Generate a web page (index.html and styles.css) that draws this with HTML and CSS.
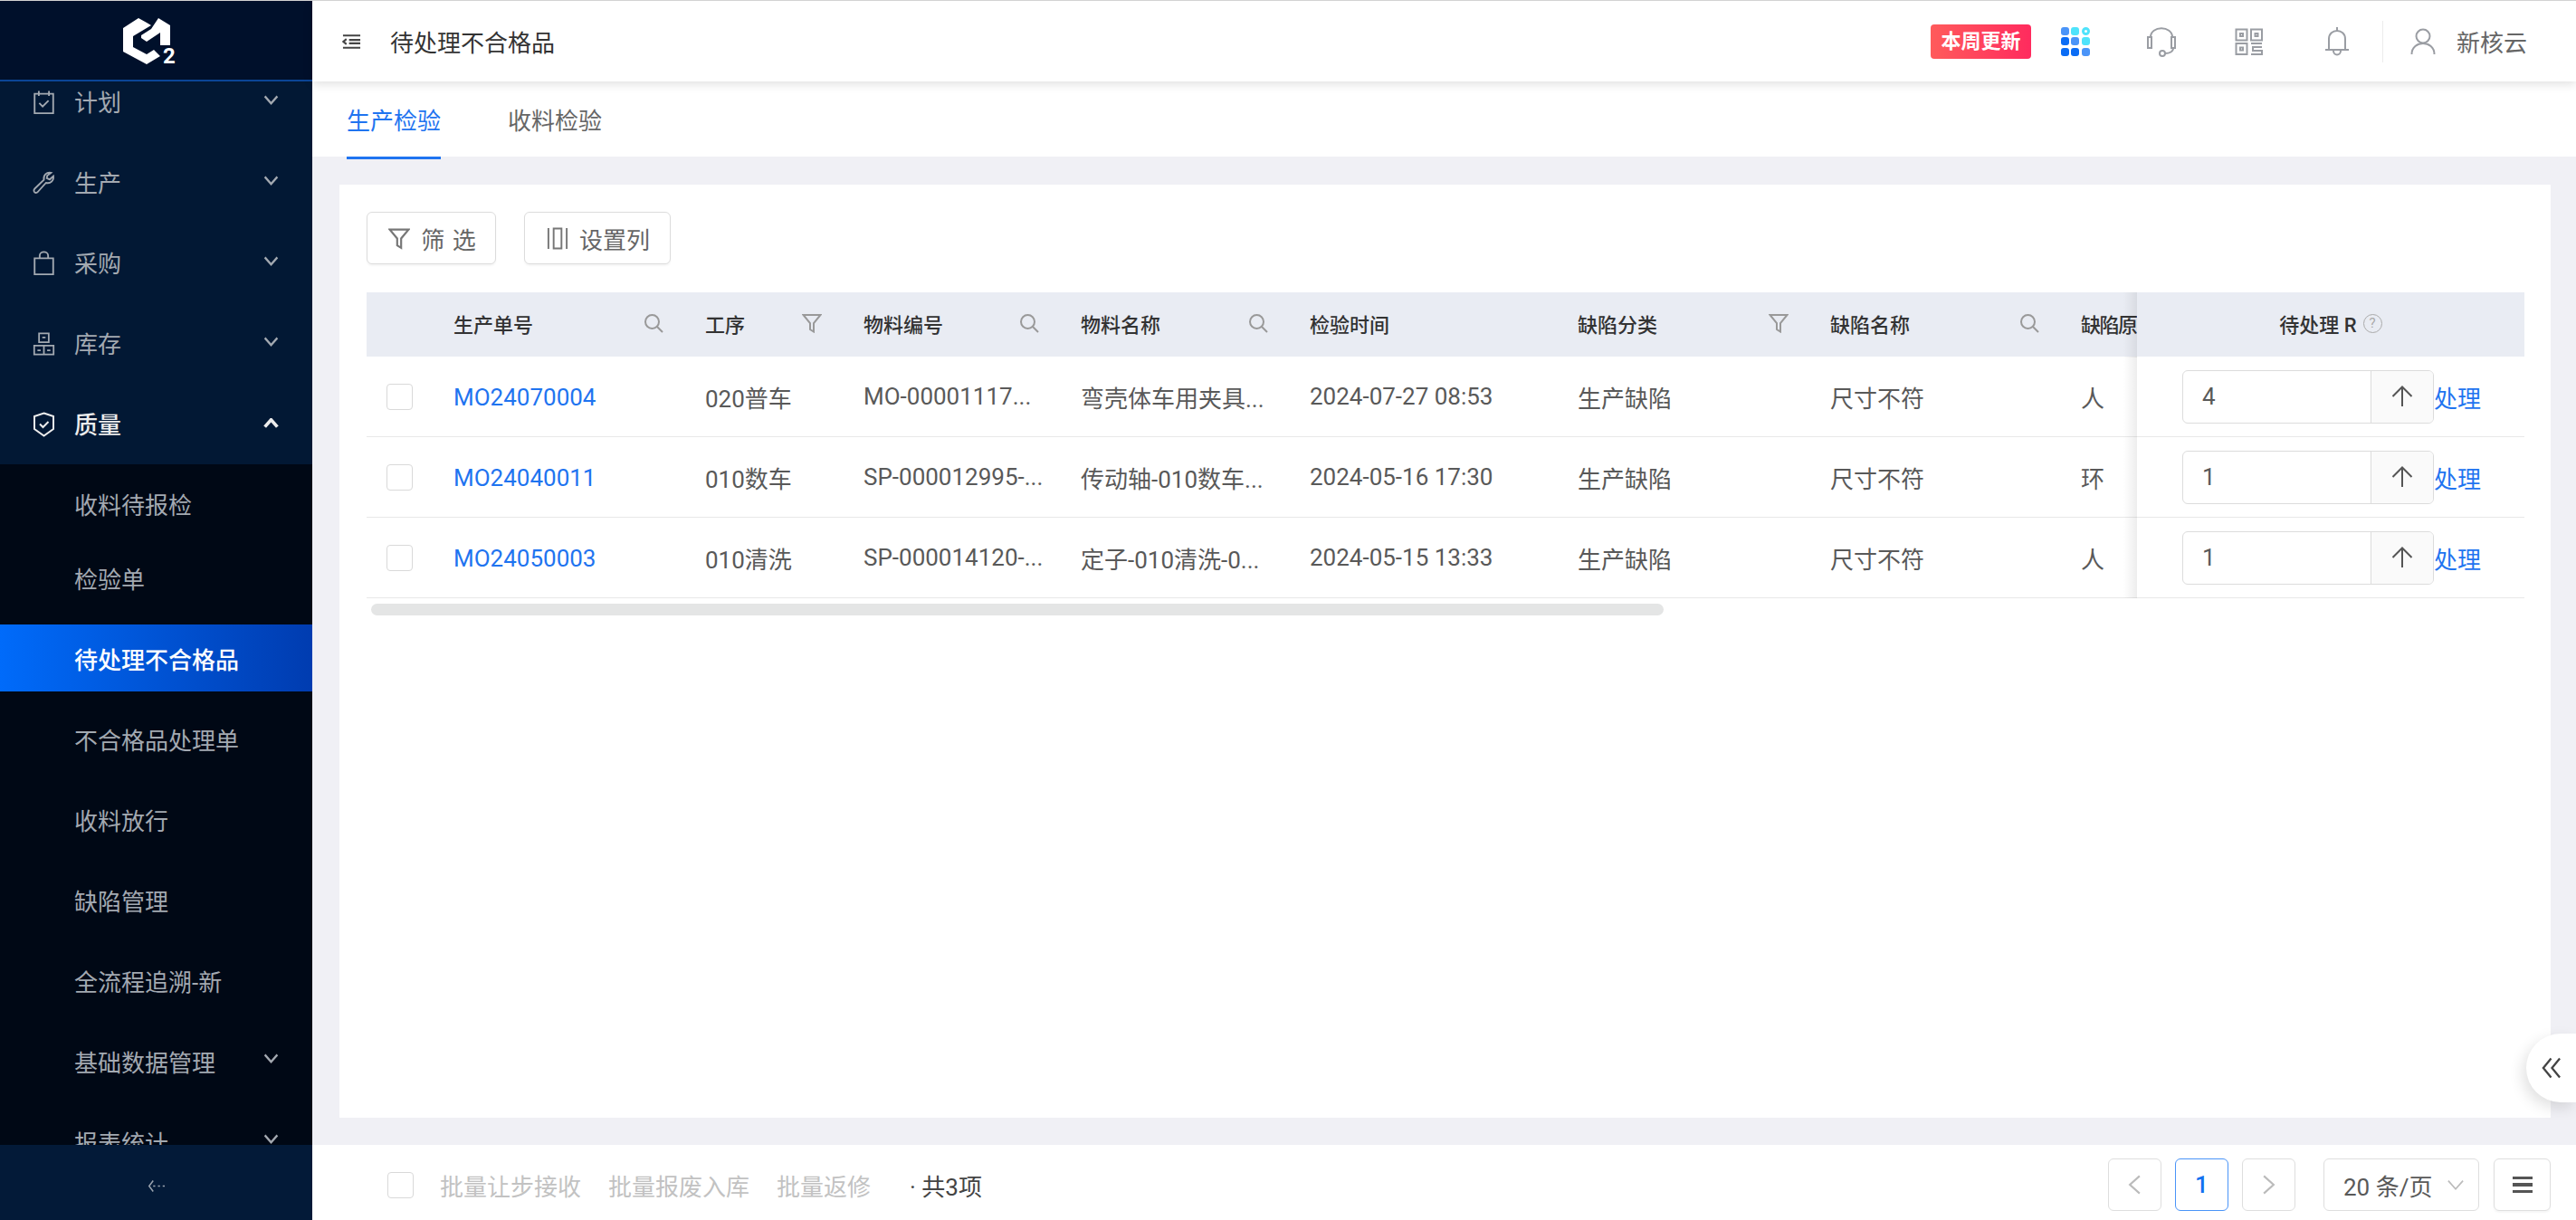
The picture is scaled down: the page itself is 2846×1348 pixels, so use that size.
FILE: index.html
```html
<!DOCTYPE html>
<html lang="zh-CN">
<head>
    <meta charset="UTF-8">
    <title>待处理不合格品</title>
    <link rel="stylesheet" href="styles.css">
</head>
<body>

<svg class="sprite" xmlns="http://www.w3.org/2000/svg">
    <symbol id="i-down" viewBox="0 0 18 12"><path d="M1.5 1.5 9 10l7.5-8.5"/></symbol>
    <symbol id="i-search" viewBox="0 0 22 22"><circle cx="9.5" cy="9.5" r="7.5"/><path d="m15 15 6 6"/></symbol>
    <symbol id="i-filter" viewBox="0 0 22 22"><path d="M1.5 2h19l-7.5 9v9.5l-4-2.5v-7z"/></symbol>
    <symbol id="i-up" viewBox="0 0 24 24"><path d="M12 23V1.500M1.500 12 12 1.500 22.500 12"/></symbol>
    <symbol id="i-plan" viewBox="0 0 26 30"><path d="M2 5h22v23H2zM7 1.500v6M19 1.500v6M7.500 16l4 4 7-7"/></symbol>
    <symbol id="i-tool" viewBox="0 0 27 27"><path d="M22 1.500C17 .5 12.500 4 13.500 10L2.500 20.500C1 22 1.500 24 2.500 24.800 3.800 25.800 5.500 25.500 6.500 24L16 13.500C21.500 15 25.500 10.500 24.800 5.500L20.500 9.500 17 8l.5-3z"/></symbol>
    <symbol id="i-bag" viewBox="0 0 26 30"><path d="M2 9h22v19H2zM8 9V6c0-6 10-6 10 0v3"/></symbol>
    <symbol id="i-stock" viewBox="0 0 28 30"><path d="M8 2h12v11H8zM2 17h12v11H2zM14 17h12v11H14zM12 7h4M6 23h4M18 23h4"/></symbol>
    <symbol id="i-shield" viewBox="0 0 24 28"><path d="M12 1.500 22.500 5v14L12 26.500 1.500 19V5zM7.500 13.500l3.500 3.500 6-6"/></symbol>
    <symbol id="i-headset" viewBox="0 0 34 34"><path d="M5 12C5 -1 29 -1 29 12M2 12h4v12H2zM28 12h4v12h-4zM30 24c0 4-4 6-9 6"/><circle cx="18" cy="30" r="3"/></symbol>
    <symbol id="i-qr" viewBox="0 0 32 30"><path d="M1.500 1.500h12v12h-12zM18 1.500h12v12H18zM1.500 17h12v12h-12zM6 6h3v3H6zM22.500 6h3v3h-3zM6 21.500h3v3H6zM18 17h12M30 21H20v4h10v4H18"/></symbol>
    <symbol id="i-bell" viewBox="0 0 28 34"><path d="M14 1v4M5 26V14c0-12 18-12 18 0v12M1 26h26M10 27c0 6 8 6 8 0"/></symbol>
    <symbol id="i-user" viewBox="0 0 28 30"><circle cx="14" cy="9" r="7.500"/><path d="M1.500 29c0-16 25-16 25 0"/></symbol>
</svg>

<aside class="sidebar">
    <div class="logo">
        <svg class="logo-mark" viewBox="0 0 90 70">
            <path d="M33 10 16 21v26l26 14 15-9-7-7-8 5-15-8V30l15-9 5-3-5-3z"/>
            <path d="M55 10 68 18v22H57V26L42 36l-6-4v-3l11-7z"/>
            <text x="60" y="59.500">2</text>
        </svg>
    </div>
    <nav class="nav">
        <div class="nav-scroll">
            <div class="nav-group">
                <a class="nav-item"><svg class="nav-icon"><use href="#i-plan"/></svg>计划<svg class="chevron"><use href="#i-down"/></svg></a>
                <a class="nav-item"><svg class="nav-icon"><use href="#i-tool"/></svg>生产<svg class="chevron"><use href="#i-down"/></svg></a>
                <a class="nav-item"><svg class="nav-icon"><use href="#i-bag"/></svg>采购<svg class="chevron"><use href="#i-down"/></svg></a>
                <a class="nav-item"><svg class="nav-icon"><use href="#i-stock"/></svg>库存<svg class="chevron"><use href="#i-down"/></svg></a>
                <a class="nav-item open"><svg class="nav-icon"><use href="#i-shield"/></svg>质量<svg class="chevron up"><use href="#i-down"/></svg></a>
            </div>
            <div class="nav-sub">
                <a class="sub-item tight">收料待报检</a>
                <a class="sub-item">检验单</a>
                <a class="sub-item active">待处理不合格品</a>
                <a class="sub-item">不合格品处理单</a>
                <a class="sub-item">收料放行</a>
                <a class="sub-item">缺陷管理</a>
                <a class="sub-item">全流程追溯-新</a>
                <a class="sub-item">基础数据管理<svg class="chevron"><use href="#i-down"/></svg></a>
                <a class="sub-item">报表统计<svg class="chevron"><use href="#i-down"/></svg></a>
            </div>
        </div>
    </nav>
    <div class="side-foot">
        <svg class="side-back" viewBox="0 0 26 20"><path d="M8 2 2 10l6 8M8 10h3M15 10h3M22 10h3"/></svg>
    </div>
</aside>

<div class="main">
    <header class="topbar">
        <svg class="fold" viewBox="0 0 22 18"><path d="M1 2h20M8 7h13M8 11h13M1 16h20M5 6 1.500 9 5 12"/></svg>
        <span class="page-title">待处理不合格品</span>
        <div class="top-right">
            <span class="badge">本周更新</span>
            <div class="apps">
                <i class="c2"></i><i class="c3"></i><i class="c3 ring"></i>
                <i class="c1"></i><i class="c2"></i><i class="c3"></i>
                <i class="c1"></i><i class="c1"></i><i class="c2"></i>
            </div>
            <svg class="top-icon headset"><use href="#i-headset"/></svg>
            <svg class="top-icon qr"><use href="#i-qr"/></svg>
            <svg class="top-icon bell"><use href="#i-bell"/></svg>
            <div class="account">
                <svg class="top-icon user"><use href="#i-user"/></svg>
                <span>新核云</span>
            </div>
        </div>
    </header>

    <div class="tabs">
        <a class="tab active">生产检验</a>
        <a class="tab">收料检验</a>
    </div>

    <div class="content">
        <div class="card">
            <div class="toolbar">
                <button class="btn filter-btn"><svg class="btn-icon"><use href="#i-filter"/></svg>筛 选</button>
                <button class="btn cols-btn">
                    <svg class="btn-icon" viewBox="0 0 24 26"><path d="M1.500 1v24M22.500 1v24M7.500 1.500h9v23h-9z"/></svg>设置列
                </button>
            </div>

            <table class="grid">
                <colgroup>
                    <col class="c-check"><col class="c-order"><col class="c-step"><col class="c-code">
                    <col class="c-name"><col class="c-time"><col class="c-type"><col class="c-defect">
                    <col class="c-cause"><col class="c-fixed">
                </colgroup>
                <thead>
                    <tr>
                        <th></th>
                        <th><div class="th-in">生产单号<svg class="th-icon"><use href="#i-search"/></svg></div></th>
                        <th><div class="th-in">工序<svg class="th-icon"><use href="#i-filter"/></svg></div></th>
                        <th><div class="th-in">物料编号<svg class="th-icon"><use href="#i-search"/></svg></div></th>
                        <th><div class="th-in">物料名称<svg class="th-icon"><use href="#i-search"/></svg></div></th>
                        <th><div class="th-in">检验时间</div></th>
                        <th><div class="th-in">缺陷分类<svg class="th-icon"><use href="#i-filter"/></svg></div></th>
                        <th><div class="th-in">缺陷名称<svg class="th-icon"><use href="#i-search"/></svg></div></th>
                        <th class="clip"><div class="th-in">缺陷原</div></th>
                        <th class="fixed fixed-head"><div class="th-in center">待处理 R <span class="help">?</span></div></th>
                    </tr>
                </thead>
                <tbody>
                    <tr>
                        <td><span class="check"></span></td>
                        <td><a class="link order">MO24070004</a></td>
                        <td>020普车</td>
                        <td>MO-00001117...</td>
                        <td>弯壳体车用夹具...</td>
                        <td>2024-07-27 08:53</td>
                        <td>生产缺陷</td>
                        <td>尺寸不符</td>
                        <td>人</td>
                        <td class="fixed"><div class="action"><div class="num"><span class="num-val">4</span><span class="num-up"><svg><use href="#i-up"/></svg></span></div><a class="link">处理</a></div></td>
                    </tr>
                    <tr>
                        <td><span class="check"></span></td>
                        <td><a class="link order">MO24040011</a></td>
                        <td>010数车</td>
                        <td>SP-000012995-...</td>
                        <td>传动轴-010数车...</td>
                        <td>2024-05-16 17:30</td>
                        <td>生产缺陷</td>
                        <td>尺寸不符</td>
                        <td>环</td>
                        <td class="fixed"><div class="action"><div class="num"><span class="num-val">1</span><span class="num-up"><svg><use href="#i-up"/></svg></span></div><a class="link">处理</a></div></td>
                    </tr>
                    <tr>
                        <td><span class="check"></span></td>
                        <td><a class="link order">MO24050003</a></td>
                        <td>010清洗</td>
                        <td>SP-000014120-...</td>
                        <td>定子-010清洗-0...</td>
                        <td>2024-05-15 13:33</td>
                        <td>生产缺陷</td>
                        <td>尺寸不符</td>
                        <td>人</td>
                        <td class="fixed"><div class="action"><div class="num"><span class="num-val">1</span><span class="num-up"><svg><use href="#i-up"/></svg></span></div><a class="link">处理</a></div></td>
                    </tr>
                </tbody>
            </table>
            <div class="hscroll"></div>
        </div>
    </div>

    <footer class="footbar">
        <span class="check foot-check"></span>
        <span class="batch">批量让步接收</span>
        <span class="batch">批量报废入库</span>
        <span class="batch">批量返修</span>
        <span class="total">· 共3项</span>
        <div class="pager">
            <span class="page-btn"><svg viewBox="0 0 14 22"><path d="M12 2 2 11l10 9"/></svg></span>
            <span class="page-btn current">1</span>
            <span class="page-btn"><svg viewBox="0 0 14 22"><path d="m2 2 10 9-10 9"/></svg></span>
            <span class="page-size">20 条/页<svg class="chevron"><use href="#i-down"/></svg></span>
            <span class="page-btn menu-btn"><i></i><i></i><i></i></span>
        </div>
    </footer>

    <div class="float-tab">
        <svg viewBox="0 0 24 26"><path d="M12 2 3 13l9 11M22 2l-9 11 9 11"/></svg>
    </div>
</div>

</body>
</html>
```

FILE: styles.css
```css
* {
    box-sizing: border-box;
}
html, body {
    height: 100%;
}
body {
    margin: 0;
    display: flex;
    overflow: hidden;
    border-top: 1px solid #d2d2d2;
    font-family: Roboto, "Noto Sans CJK SC", sans-serif;
    font-size: 26px;
    color: #595959;
    background-color: #fff;
}
a {
    text-decoration: none;
}
svg {
    fill: none;
    stroke: currentColor;
    stroke-width: 2;
}
.sprite {
    display: none;
}

/* 左侧菜单 */
.sidebar {
    width: 345px;
    flex: none;
    display: flex;
    flex-direction: column;
    background-color: #021834;
    color: #a3a9b1;
}
.logo {
    height: 89px;
    flex: none;
    padding: 9px 0 0 120px;
    background-color: #00102b;
    border-bottom: 2px solid #0b4596;
}
.logo-mark {
    display: block;
    width: 90px;
    height: 70px;
    fill: #fff;
    stroke: none;
}
.logo-mark text {
    font-family: Roboto, sans-serif;
    font-size: 24px;
    font-weight: 700;
}
.nav {
    flex: 1;
    overflow: hidden;
}
.nav-scroll {
    margin-top: -14px;
}
.nav-group {
    display: flex;
    flex-direction: column;
    gap: 15px;
    padding-bottom: 7px;
}
.nav-item, .sub-item {
    height: 74px;
    display: flex;
    align-items: center;
    padding-left: 82px;
    position: relative;
}
.nav-item {
    padding-bottom: 3px;
}
.nav-item.open {
    color: #ececec;
    font-weight: 500;
}
.nav-icon {
    position: absolute;
    left: 36px;
    top: 23px;
    width: 25px;
    height: 28px;
}
.chevron {
    width: 17px;
    height: 11px;
    margin-left: auto;
    margin-right: 37px;
    margin-bottom: 6px;
    stroke-width: 2.5;
}
.nav-item .chevron {
    margin-bottom: 3px;
}
.nav-item .chevron.up {
    transform: rotate(180deg);
    margin-bottom: 0;
    stroke-width: 4;
}
.nav-sub {
    display: flex;
    flex-direction: column;
    gap: 15px;
    padding-top: 6px;
    background-color: #000815;
}
.sub-item.tight {
    margin-bottom: -7px;
}
.sub-item.active {
    color: #fff;
    font-weight: 500;
    background: linear-gradient(90deg, #006bfa, #003cb0);
}
.side-foot {
    height: 83px;
    flex: none;
    display: flex;
    align-items: center;
    justify-content: center;
    padding-top: 8px;
    background-color: #031a38;
}
.side-back {
    width: 22px;
    height: 15px;
    color: #9aa3ae;
}

/* 右侧主体 */
.main {
    flex: 1;
    min-width: 0;
    display: flex;
    flex-direction: column;
    position: relative;
}
.topbar {
    height: 89px;
    flex: none;
    display: flex;
    align-items: center;
    padding-left: 33px;
    background-color: #fff;
    box-shadow: 0 3px 10px rgba(0, 0, 0, 0.12);
    position: relative;
    z-index: 1;
}
.fold {
    width: 21px;
    height: 18px;
    color: #444;
    stroke-width: 2.2;
}
.page-title {
    margin-left: 32px;
    color: #333;
}
.top-right {
    margin-left: auto;
    display: flex;
    align-items: center;
}
.badge {
    width: 111px;
    height: 38px;
    margin-right: 33px;
    border-radius: 4px;
    background: linear-gradient(90deg, #ff5b5b, #ff2b5e);
    color: #fff;
    font-size: 22px;
    font-weight: 700;
    line-height: 38px;
    text-align: center;
}
.apps {
    width: 32px;
    height: 32px;
    display: grid;
    grid-template-columns: repeat(3, 9px);
    grid-auto-rows: 9px;
    gap: 2.5px;
    margin-right: 62px;
}
.apps i {
    border-radius: 3px;
}
.apps .c1 {
    background-color: #0a6cf5;
}
.apps .c2 {
    background-color: #4a94f8;
}
.apps .c3 {
    background-color: #4fe3fb;
}
.apps .ring {
    border-radius: 50%;
    background-color: #fff;
    border: 3px solid #4fe3fb;
}
.top-icon {
    flex: none;
    color: #9a9da3;
}
.headset {
    width: 34px;
    height: 34px;
    margin-right: 64px;
}
.qr {
    width: 32px;
    height: 30px;
    margin-right: 67px;
}
.bell {
    width: 28px;
    height: 34px;
    margin-right: 36px;
}
.account {
    height: 46px;
    display: flex;
    align-items: center;
    padding: 0 54px 0 30px;
    border-left: 1px solid #ececec;
    color: #666;
}
.user {
    width: 28px;
    height: 30px;
    margin-right: 23px;
}
.tabs {
    height: 83px;
    flex: none;
    display: flex;
    gap: 74px;
    padding-left: 38px;
    background-color: #fff;
}
.tab {
    height: 86px;
    padding-top: 23px;
    color: #666;
    position: relative;
}
.tab.active {
    color: #1f74f0;
    border-bottom: 3px solid #1f74f0;
}
.content {
    flex: 1;
    min-height: 0;
    display: flex;
    padding: 31px 28px 30px 30px;
    background-color: #f0f0f5;
}
.card {
    flex: 1;
    min-width: 0;
    padding: 30px 29px 0 30px;
    background-color: #fff;
}
.toolbar {
    display: flex;
    gap: 31px;
    margin-bottom: 31px;
}
.btn {
    height: 58px;
    display: flex;
    align-items: center;
    justify-content: center;
    padding: 0 0 0 2px;
    border: 1px solid #dcdcdc;
    border-radius: 6px;
    background-color: #fff;
    box-shadow: 0 2px 2px rgba(0, 0, 0, 0.04);
    color: #666;
    font: inherit;
}
.filter-btn {
    width: 143px;
    word-spacing: 2px;
}
.cols-btn {
    width: 162px;
}
.btn-icon {
    width: 24px;
    height: 25px;
    margin-right: 12px;
    color: #777;
}
.grid {
    width: 2384px;
    table-layout: fixed;
    border-spacing: 0;
}
.c-check { width: 78px; }
.c-order { width: 278px; }
.c-step { width: 175px; }
.c-code { width: 240px; }
.c-name { width: 253px; }
.c-time { width: 296px; }
.c-type { width: 279px; }
.c-defect { width: 277px; }
.c-cause { width: 80px; }
.c-fixed { width: 428px; }
th {
    height: 71px;
    padding: 0 0 0 18px;
    background-color: #e9ecf3;
    color: #333;
    font-size: 22px;
    font-weight: 500;
    text-align: left;
    white-space: nowrap;
}
th.clip {
    letter-spacing: -1.5px;
}
td {
    height: 89px;
    padding: 0 0 0 18px;
    border-bottom: 1px solid #e8e8e8;
    white-space: nowrap;
}
.th-in {
    display: flex;
    align-items: center;
    justify-content: space-between;
    padding-right: 29px;
    padding-bottom: 3px;
}
.th-in.center {
    justify-content: center;
    gap: 7px;
    padding-right: 0;
}
.clip .th-in {
    padding-right: 0;
}
.th-icon {
    width: 22px;
    height: 22px;
    margin-right: -1px;
    color: #999;
}
.fixed {
    padding: 0;
    background-color: #fff;
    position: relative;
}
/* 固定列左侧的阴影 */
.fixed::before {
    content: "";
    position: absolute;
    top: 0;
    bottom: -1px;
    left: -15px;
    width: 15px;
    background: linear-gradient(90deg, rgba(0, 0, 0, 0), rgba(0, 0, 0, 0.07));
}
.fixed-head {
    background-color: #e9ecf3;
}
.help {
    display: inline-block;
    width: 21px;
    height: 21px;
    border: 1px solid #aaa;
    border-radius: 50%;
    color: #aaa;
    font-size: 15px;
    font-weight: 400;
    line-height: 19px;
    text-align: center;
}
.check {
    display: block;
    width: 29px;
    height: 29px;
    margin-left: 4px;
    border: 1px solid #d9d9d9;
    border-radius: 4px;
    background-color: #fff;
}
.link {
    color: #1f74f0;
}
.order {
    display: inline-block;
    padding-top: 2px;
}
.action {
    display: flex;
    align-items: center;
    padding-left: 50px;
}
.num {
    width: 278px;
    height: 59px;
    display: flex;
    border: 1px solid #dcdcdc;
    border-radius: 6px;
    overflow: hidden;
}
.num-val {
    flex: 1;
    padding-left: 21px;
    line-height: 57px;
}
.num-up {
    width: 69px;
    display: flex;
    align-items: center;
    justify-content: center;
    border-left: 1px solid #dcdcdc;
    background-color: #fafafa;
    color: #555;
}
.num-up svg {
    width: 24px;
    height: 24px;
}
.hscroll {
    width: 1428px;
    height: 13px;
    margin: 6px 0 0 5px;
    border-radius: 7px;
    background-color: #e4e5e5;
}

/* 底部分页 */
.footbar {
    height: 83px;
    flex: none;
    display: flex;
    align-items: center;
    padding: 5px 28px 0 83px;
    background-color: #fff;
}
.foot-check {
    margin: 0 29px 0 0;
}
.batch {
    margin-right: 30px;
    color: #c2c2c2;
}
.total {
    margin-left: 13px;
    color: #444;
}
.pager {
    margin-left: auto;
    display: flex;
    align-items: center;
    gap: 15px;
}
.page-btn {
    width: 59px;
    height: 58px;
    display: flex;
    align-items: center;
    justify-content: center;
    border: 1px solid #dedede;
    border-radius: 6px;
    color: #bbb;
}
.page-btn svg {
    width: 15px;
    height: 24px;
}
.page-btn.current {
    border-color: #4a94f8;
    color: #1270f0;
    font-weight: 500;
}
.page-size {
    width: 172px;
    height: 58px;
    display: flex;
    align-items: center;
    margin-left: 16px;
    padding-left: 21px;
    border: 1px solid #dedede;
    border-radius: 6px;
    white-space: nowrap;
}
.page-size .chevron {
    margin-right: 15px;
    margin-bottom: 0;
    color: #bbb;
    width: 20px;
    height: 13px;
    stroke-width: 1.5;
}
.menu-btn {
    width: 63px;
    margin-left: 1px;
    flex-direction: column;
    gap: 4px;
    box-shadow: 0 2px 2px rgba(0, 0, 0, 0.04);
}
.menu-btn i {
    width: 22px;
    height: 3.500px;
    background-color: #555;
}
.float-tab {
    position: absolute;
    right: 0;
    top: 1141px;
    width: 55px;
    height: 76px;
    display: flex;
    align-items: center;
    padding-left: 16px;
    border-radius: 38px 0 0 38px;
    background-color: #fff;
    box-shadow: -4px 6px 16px rgba(0, 0, 0, 0.12);
    color: #444;
}
.float-tab svg {
    width: 23px;
    height: 26px;
    stroke-width: 2.4;
}
```
